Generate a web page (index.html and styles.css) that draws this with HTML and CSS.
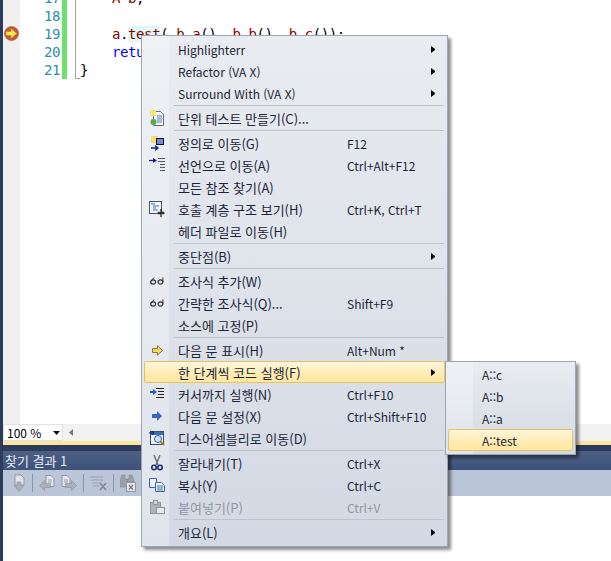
FILE: index.html
```html
<!DOCTYPE html>
<html lang="ko">
<head>
<meta charset="utf-8">
<title>Context menu</title>
<link rel="stylesheet" href="styles.css">
</head>
<body>
<div class="ide">
  <div class="editor">
    <div class="glyph-margin">
      <svg class="bp" width="15" height="15" viewBox="0 0 15 15"><circle cx="7.500" cy="7.500" r="7" fill="#c05a3a" stroke="#a84a32" stroke-width=".6"/><path d="M2 5.500h5V2.500l6 5-6 5v-3H2z" fill="#fbe64f" stroke="#b08a24" stroke-width=".6"/></svg>
    </div>
    <div class="lines">
      <div class="ln">17</div>
      <div class="ln">18</div>
      <div class="ln">19</div>
      <div class="ln">20</div>
      <div class="ln">21</div>
    </div>
    <div class="changebar"></div>
    <div class="outline"></div>
    <div class="code">
      <div class="cl pad"><span class="red">A b</span>;</div>
      <div class="cl"></div>
      <div class="cl pad"><span class="red">a</span>.<span class="hl red">test</span>( <span class="red">b</span>.<span class="red">a</span>(), <span class="red">b</span>.<span class="red">b</span>(), <span class="red">b</span>.<span class="red">c</span>());</div>
      <div class="cl pad"><span class="blue">return</span> 0;</div>
      <div class="cl">}</div>
    </div>
  </div>
  <div class="hscroll">
    <div class="zoom"><span>100 %</span><svg width="7" height="4" viewBox="0 0 7 4"><path d="M0 0h7L3.500 4z" fill="#111"/></svg></div>
    <svg class="sl" width="5" height="7" viewBox="0 0 5 7"><path d="M4 0v7L0 3.500z" fill="#777"/></svg>
  </div>
  <div class="goldline"></div>
  <div class="dock">
    <div class="panel-title">찾기 결과 1</div>
    <div class="toolbar">
      <svg width="14" height="18" viewBox="0 0 14 18"><path d="M3 1h6l3 3v7H3z" fill="#e2e6ec" stroke="#8f98a4"/><path d="M7 17.500L2 11.500h3V8h4v3.500h3z" fill="#aab0b8" stroke="#8a929d" stroke-width=".6"/></svg>
      <i class="tsep"></i>
      <svg width="16" height="16" viewBox="0 0 16 16"><path d="M7 .5h5l3 3v8H7z" fill="#e2e6ec" stroke="#8f98a4"/><path d="M9 5h4M9 7h4" stroke="#9aa2ae"/><path d="M.5 10.500l5-5v3h6v4h-6v3z" fill="#aab0b8" stroke="#8a929d" stroke-width=".6"/></svg>
      <svg width="16" height="16" viewBox="0 0 16 16"><path d="M1 .5h5l3 3v8H1z" fill="#e2e6ec" stroke="#8f98a4"/><path d="M3 5h4M3 7h4" stroke="#9aa2ae"/><path d="M15.500 10.500l-5-5v3h-6v4h6v3z" fill="#aab0b8" stroke="#8a929d" stroke-width=".6"/></svg>
      <i class="tsep"></i>
      <svg width="17" height="16" viewBox="0 0 17 16"><path d="M0 2h13M1 5h12M2 8h9M3 11h6" stroke="#9aa1ab" fill="none"/><path d="M10 8l6 7M16 8l-6 7" stroke="#85898f" stroke-width="1.500"/></svg>
      <i class="tsep"></i>
      <svg width="16" height="18" viewBox="0 0 16 18"><path d="M2 1h3v4h2v8H0V6zM9 1h3l2 5v2H7V5h2z" fill="#9aa0a8" stroke="#7f858d" stroke-width=".6"/><rect x="6.500" y="8.500" width="9" height="9" fill="#e2e6ec" stroke="#8f98a4"/><path d="M9 11l4 4.500M13 11l-4 4.500" stroke="#777" stroke-width="1.200"/></svg>
    </div>
    <div class="results"></div>
  </div>
</div>

<div class="menu main-menu">
  <div class="row"><span class="ic"></span><span class="lbl lat">Highlighterr</span><span class="key"></span><span class="arr on"></span></div>
  <div class="row"><span class="ic"></span><span class="lbl lat">Refactor (VA X)</span><span class="key"></span><span class="arr on"></span></div>
  <div class="row"><span class="ic"></span><span class="lbl lat">Surround With (VA X)</span><span class="key"></span><span class="arr on"></span></div>
  <div class="sep"></div>
  <div class="row"><span class="ic"><svg width="16" height="16" viewBox="0 0 16 16"><path d="M4.500 1.500h7l3 3v11h-10z" fill="#f4f6fa" stroke="#5f6f86"/><path d="M8 6h5M8 8h5M8 10h5M8 12h5" stroke="#5c7fb0"/><rect x="1" y="0" width="6" height="6" fill="#f6df6a"/><path d="M2 2h1M5 2h1M2 4h1M5 4h1" stroke="#fff8c8"/><circle cx="4.500" cy="12" r="3" fill="#5ea84e"/></svg></span><span class="lbl">단위 테스트 만들기(C)...</span><span class="key"></span><span class="arr"></span></div>
  <div class="sep"></div>
  <div class="row"><span class="ic"><svg width="15" height="15" viewBox="0 0 15 15"><rect x="1" y="0" width="7" height="7" fill="#f2dc6e"/><path d="M2 2h1M5 2h1M2 4h1M5 4h1" stroke="#fff8c8"/><rect x="6.500" y="2.500" width="7" height="6" fill="#7f88c4" stroke="#10122e"/><path d="M1 12h7M5 9.500l3 2.500-3 2.500" stroke="#14207e" stroke-width="1.300" fill="none"/></svg></span><span class="lbl">정의로 이동(G)</span><span class="key">F12</span><span class="arr"></span></div>
  <div class="row"><span class="ic"><svg width="16" height="14" viewBox="0 0 16 14"><path d="M0 2.500h6" stroke="#14207e" stroke-width="1.300"/><path d="M4 0l4 2.500L4 5z" fill="#14207e"/><path d="M9 .5h7M9 3.500h7M11 6.500h5M11 9.500h5M11 12.500h5" stroke="#50596a"/></svg></span><span class="lbl">선언으로 이동(A)</span><span class="key">Ctrl+Alt+F12</span><span class="arr"></span></div>
  <div class="row"><span class="ic"></span><span class="lbl">모든 참조 찾기(A)</span><span class="key"></span><span class="arr"></span></div>
  <div class="row"><span class="ic"><svg width="16" height="16" viewBox="0 0 16 16"><rect x=".5" y=".5" width="12" height="12" fill="#f5f7fa" stroke="#4b5668"/><path d="M2 3h4M4 5h6M4 7h3M4 9h5" stroke="#3d72bd"/><path d="M12 8v8M8.500 12h7" stroke="#222" stroke-width="1.300"/><path d="M10 10.500v3M14 10.500v3" stroke="#222"/></svg></span><span class="lbl">호출 계층 구조 보기(H)</span><span class="key">Ctrl+K, Ctrl+T</span><span class="arr"></span></div>
  <div class="row"><span class="ic"></span><span class="lbl">헤더 파일로 이동(H)</span><span class="key"></span><span class="arr"></span></div>
  <div class="sep"></div>
  <div class="row"><span class="ic"></span><span class="lbl">중단점(B)</span><span class="key"></span><span class="arr on"></span></div>
  <div class="sep"></div>
  <div class="row"><span class="ic"><svg width="14" height="8" viewBox="0 0 14 8"><ellipse cx="3.200" cy="5" rx="2.400" ry="2.200" fill="#e8ecf2" stroke="#333" stroke-width="1.200"/><ellipse cx="10.500" cy="5" rx="2.400" ry="2.200" fill="#e8ecf2" stroke="#333" stroke-width="1.200"/><path d="M.8 4.500L4 .5M12.900 4.500V.5" stroke="#333" fill="none"/></svg></span><span class="lbl">조사식 추가(W)</span><span class="key"></span><span class="arr"></span></div>
  <div class="row"><span class="ic"><svg width="14" height="8" viewBox="0 0 14 8"><ellipse cx="3.200" cy="5" rx="2.400" ry="2.200" fill="#e8ecf2" stroke="#333" stroke-width="1.200"/><ellipse cx="10.500" cy="5" rx="2.400" ry="2.200" fill="#e8ecf2" stroke="#333" stroke-width="1.200"/><path d="M.8 4.500L4 .5M12.900 4.500V.5" stroke="#333" fill="none"/></svg></span><span class="lbl">간략한 조사식(Q)...</span><span class="key">Shift+F9</span><span class="arr"></span></div>
  <div class="row"><span class="ic"></span><span class="lbl">소스에 고정(P)</span><span class="key"></span><span class="arr"></span></div>
  <div class="sep"></div>
  <div class="row"><span class="ic"><svg width="11" height="11" viewBox="0 0 11 11"><path d="M.5 3.500h5V.7l5 4.800-5 4.800V7.500h-5z" fill="#f6d964" stroke="#8b7a3a"/></svg></span><span class="lbl">다음 문 표시(H)</span><span class="key">Alt+Num *</span><span class="arr"></span></div>
  <div class="row active"><span class="ic"></span><span class="lbl">한 단계씩 코드 실행(F)</span><span class="key"></span><span class="arr on"></span></div>
  <div class="row"><span class="ic"><svg width="14" height="12" viewBox="0 0 14 12"><path d="M0 4h4" stroke="#2a5bb8" stroke-width="2"/><path d="M3 1l4 3-4 3z" fill="#2a5bb8"/><path d="M6 .5h8M8 3.500h6M8 6.500h6M6 9.500h8" stroke="#222"/></svg></span><span class="lbl">커서까지 실행(N)</span><span class="key">Ctrl+F10</span><span class="arr"></span></div>
  <div class="row"><span class="ic"><svg width="10" height="10" viewBox="0 0 10 10"><path d="M0 3h5V0l5 5-5 5V7H0z" fill="#3764c4"/></svg></span><span class="lbl">다음 문 설정(X)</span><span class="key">Ctrl+Shift+F10</span><span class="arr"></span></div>
  <div class="row"><span class="ic"><svg width="16" height="16" viewBox="0 0 16 16"><rect x="1.500" y="1.500" width="13" height="13" fill="#eef2f7" stroke="#3e5068"/><rect x="2" y="2" width="12" height="3" fill="#3e6fb0"/><circle cx="9" cy="9" r="3.500" fill="#cfe3f7" stroke="#2f62b0"/><path d="M0 3h4M3 1l2 2-2 2" stroke="#14207e" fill="none"/><path d="M11.500 11.500l3.500 3.500" stroke="#b07d2a" stroke-width="2"/></svg></span><span class="lbl">디스어셈블리로 이동(D)</span><span class="key"></span><span class="arr"></span></div>
  <div class="sep"></div>
  <div class="row"><span class="ic"><svg width="12" height="16" viewBox="0 0 12 16"><path d="M3 0l4 10M9 0L5 10" stroke="#6a6f78" stroke-width="1.400"/><circle cx="3" cy="12.500" r="2.200" fill="none" stroke="#20306e" stroke-width="1.600"/><circle cx="9" cy="12.500" r="2.200" fill="none" stroke="#20306e" stroke-width="1.600"/></svg></span><span class="lbl">잘라내기(T)</span><span class="key">Ctrl+X</span><span class="arr"></span></div>
  <div class="row"><span class="ic"><svg width="16" height="14" viewBox="0 0 16 14"><path d="M.5.500h7v9h-7z" fill="#eef2f8" stroke="#3a68b0"/><path d="M6.500 4.500h6l3 3v6h-9z" fill="#f6f8fb" stroke="#3a68b0"/><path d="M8 8h6M8 10h6M8 12h6" stroke="#3a68b0"/></svg></span><span class="lbl">복사(Y)</span><span class="key">Ctrl+C</span><span class="arr"></span></div>
  <div class="row off"><span class="ic"><svg width="16" height="16" viewBox="0 0 16 16"><rect x="1.500" y="3.500" width="10" height="11" fill="#aeb3ba" stroke="#8f949b"/><rect x="4.500" y="1.500" width="4" height="4" fill="#d4d7dc" stroke="#8f949b"/><rect x="7.500" y="8.500" width="8" height="6" fill="#e6e8ec" stroke="#8f949b"/></svg></span><span class="lbl">붙여넣기(P)</span><span class="key">Ctrl+V</span><span class="arr"></span></div>
  <div class="sep"></div>
  <div class="row"><span class="ic"></span><span class="lbl">개요(L)</span><span class="key"></span><span class="arr on"></span></div>
</div>

<div class="menu sub-menu">
  <div class="row"><span class="ic"></span><span class="lbl lat">A::c</span></div>
  <div class="row"><span class="ic"></span><span class="lbl lat">A::b</span></div>
  <div class="row"><span class="ic"></span><span class="lbl lat">A::a</span></div>
  <div class="row active"><span class="ic"></span><span class="lbl lat">A::test</span></div>
</div>
</body>
</html>
```
FILE: styles.css
```css
* { box-sizing: border-box; }
html, body { margin: 0; height: 100%; overflow: hidden; background: #fff; }
body { font-family: "Noto Sans CJK KR", sans-serif; font-size: 13px; color: #1b2538; }
.ide { height: 561px; display: flex; flex-direction: column; border-left: 3px solid #2b3c5c; }
.editor { height: 424px; display: flex; background: #fff; overflow: hidden; }
.glyph-margin { width: 17px; background: #f0f0f0; padding: 26px 0 0 1px; }
.bp { display: block; }
.lines, .code { font: 14px/18px "DejaVu Sans Mono", monospace; letter-spacing: -.4px; margin-top: -11px; }
.lines { width: 40px; text-align: right; color: #2b91af; }
.ln, .cl { height: 18px; white-space: pre; }
.changebar { width: 5px; height: 79px; background: #6ee06e; margin-left: 2px; }
.outline { width: 5px; height: 79px; margin-left: 8px; border-left: 1px solid #a5a5a5; border-bottom: 1px solid #a5a5a5; }
.code { flex: 1; color: #000; }
.pad { padding-left: 32px; }
.red { color: #8b0000; }
.blue { color: #0000ff; }
.hl { background: #e0f8f8; }
.hscroll { height: 17px; background: #f2f2f2; display: flex; align-items: center; }
.zoom { width: 60px; height: 17px; background: #fff; border: 1px solid #e3e3e3; display: flex; align-items: center; justify-content: space-between; padding: 0 2px 0 3px; font-size: 12px; color: #000; }
.sl { margin-left: 6px; }
.goldline { height: 4px; background: #fbe3a0; }
.dock { flex: 1; background: #2b3c5c; padding-top: 6px; display: flex; flex-direction: column; }
.panel-title { height: 19px; background: linear-gradient(#4d6082, #3e527a); color: #e4ecf8; font-size: 13px; line-height: 19px; padding-left: 2px; }
.toolbar { height: 26px; background: #bac6d8; display: flex; align-items: center; gap: 6px; padding-left: 9px; }
.tsep { width: 1px; height: 18px; background: #8a96a8; }
.results { flex: 1; background: #fff; }
.menu { position: absolute; display: flex; flex-direction: column; border: 1px solid #9ba7b7; box-shadow: 3px 3px 3px rgba(0,0,0,.45); padding: 2px; background: linear-gradient(rgba(255,255,255,.28), rgba(255,255,255,.28)) left top / 27px 100% no-repeat, linear-gradient(#e9ecf0, #d3d9e4); }
.main-menu { left: 141px; top: 35px; width: 307px; height: 512px; }
.sub-menu { left: 445px; top: 361px; width: 131px; height: 94px; padding-top: 1px; padding-bottom: 1px; }
.row { height: 22px; flex: none; display: flex; align-items: center; white-space: nowrap; border: 1px solid transparent; border-radius: 2px; }
.ic { width: 24px; flex: none; display: flex; align-items: center; justify-content: center; margin-right: 9px; }
.lbl { width: 169px; flex: none; }
.lat { font-size: 12px; }
.key { flex: 1; font-size: 12px; }
.arr { width: 5px; height: 7px; flex: none; margin-right: 8px; }
.arr.on { border-left: 4px solid #000; border-top: 3.500px solid transparent; border-bottom: 3.500px solid transparent; }
.row.off .lbl, .row.off .key { color: #8f96a3; }
.row.active { background: linear-gradient(#fff6dc, #ffeebb 45%, #ffe6a0); border-color: #e5c365; }
.sep { height: 1px; flex: none; background: #bcc3cf; margin: 1px 1px 1px 30px; }
.sub-menu .ic { margin-right: 9px; }
.sub-menu .lbl { width: auto; }
```
